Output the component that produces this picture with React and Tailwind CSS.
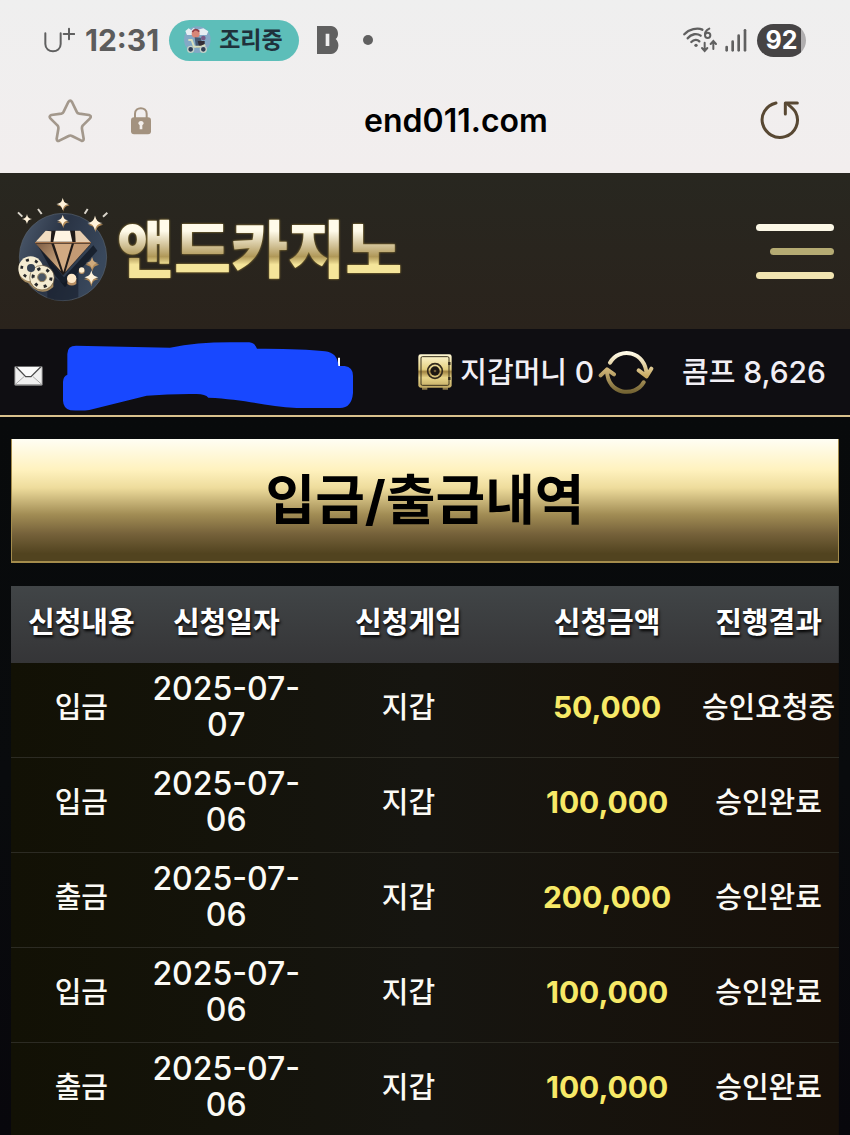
import React from "react";

const rows = [
  { type: "입금", date: "2025-07-07", game: "지갑", amount: "50,000", result: "승인요청중" },
  { type: "입금", date: "2025-07-06", game: "지갑", amount: "100,000", result: "승인완료" },
  { type: "출금", date: "2025-07-06", game: "지갑", amount: "200,000", result: "승인완료" },
  { type: "입금", date: "2025-07-06", game: "지갑", amount: "100,000", result: "승인완료" },
  { type: "출금", date: "2025-07-06", game: "지갑", amount: "100,000", result: "승인완료" },
];

function WifiIcon() {
  return (
    <svg viewBox="0 0 102 78" className="w-[34px] h-[26px]" fill="none" stroke="#606060" strokeWidth="7" strokeLinecap="round">
      <path d="M4 22 C18 6 44 1 58 8" />
      <path d="M14 34 C25 20 42 18 53 26" />
      <path d="M25 45 C33 37 43 37 49 43" />
      <circle cx="39" cy="55" r="5" fill="#606060" stroke="none" />
      <path d="M79 5 C67 11 65 20 66 25 M66 25 a8 8 0 1 0 16 0 a8 8 0 1 0 -16 0" strokeWidth="6" />
      <path d="M65 47 V71 M57 63 L65 72 L73 63" strokeWidth="6" />
      <path d="M91 66 V43 M83 51 L91 42 L99 51" strokeWidth="6" />
    </svg>
  );
}

function SignalIcon() {
  return (
    <svg viewBox="0 0 66 69" className="w-[22px] h-[23px]" stroke="#606060" strokeWidth="8" strokeLinecap="round">
      <path d="M5 54 V64" />
      <path d="M23 38 V64" />
      <path d="M41 20 V64" />
      <path d="M60 4 V64" />
    </svg>
  );
}

function StatusBar() {
  return (
    <div className="flex items-center justify-between h-20 pl-11 pr-11">
      <div className="flex items-center">
        <svg viewBox="0 0 93 78" className="w-[31px] h-[26px]" fill="none" stroke="#606060" strokeWidth="6" strokeLinecap="round">
          <path d="M4 19 V51 C4 80 50 80 50 51 V19" />
          <path d="M75 5 V37 M59 21 H91" />
        </svg>
        <span className="ml-2.5 text-[30px] leading-10 font-bold text-[#5c5c5c]">12:31</span>
        <div className="flex items-center ml-2.5 h-[41px] rounded-full bg-[#5dbeb9] pl-3.5 pr-4 gap-2">
          <svg viewBox="0 0 84 90" className="w-7 h-[30px]">
            <circle cx="43" cy="44" r="40" fill="#83a9c6" />
            <path d="M7 18 L17 10 L25 16 L31 9 L42 15 L61 10 L76 19 L71 30 H12 Z" fill="#e6eef3" />
            <circle cx="38" cy="26" r="12" fill="#d98778" />
            <path d="M28 21 Q37 7 49 20" fill="none" stroke="#913e48" strokeWidth="5" />
            <path d="M35 37 L53 38 L62 68 H39 Z" fill="#485a73" />
            <path d="M44 48 H65 V66 H49 Z" fill="#332d36" />
            <path d="M16 45 H26 L33 65 H55 L67 60" fill="none" stroke="#d8dfbf" strokeWidth="6" />
            <circle cx="23" cy="73" r="9" fill="#313f57" stroke="#c6d3c9" strokeWidth="4" />
            <circle cx="61" cy="73" r="9" fill="#313f57" stroke="#c6d3c9" strokeWidth="4" />
            <circle cx="61" cy="39" r="7" fill="#7a5a86" />
          </svg>
          <span className="text-[23px] leading-8 font-bold text-[#20313b]">조리중</span>
        </div>
        <svg viewBox="0 0 66 84" className="ml-[18px] w-[22px] h-7">
          <path fillRule="evenodd" fill="#606060" d="M0 0 H42 C62 0 70 27 56 39 C72 53 63 84 42 84 H0 Z M26 23 V60 H37 V23 Z" />
        </svg>
        <span className="ml-6 size-2.5 rounded-full bg-[#606060]" />
      </div>
      <div className="flex items-center">
        <WifiIcon />
        <span className="ml-2">
          <SignalIcon />
        </span>
        <div className="ml-2.5 h-[33px] w-[49px] rounded-full bg-linear-to-r from-[#464445] from-90% to-[#b0aeaf] to-90% text-center">
          <span className="text-[25px] leading-[33px] font-bold text-white">92</span>
        </div>
      </div>
    </div>
  );
}

function AddressBar() {
  return (
    <div className="flex items-center h-[93px] pb-3 pl-12 pr-12">
      <button type="button" aria-label="즐겨찾기">
        <svg viewBox="0 0 132 132" className="w-11 h-11" fill="none" stroke="#a3988c" strokeWidth="8" strokeLinejoin="round">
          <path d="M61 9 Q67 1 72 9 L86 38 Q88 43 94 44 L123 48 Q132 51 126 58 L104 80 Q101 84 102 90 L107 119 Q107 127 100 125 L72 111 Q67 108 62 111 L34 125 Q26 128 26 119 L31 90 Q32 84 29 80 L7 58 Q2 51 10 48 L40 44 Q45 43 47 38 Z" />
        </svg>
      </button>
      <button type="button" aria-label="보안 연결" className="ml-[38px]">
        <svg viewBox="0 0 66 84" className="w-[22px] h-7">
          <path d="M15 34 V20 C15 -2 50 -2 50 20 V34" fill="none" stroke="#a3927f" strokeWidth="6" />
          <rect x="3" y="31" width="60" height="51" rx="9" fill="#a3927f" />
          <path d="M25 50 a8 8 0 1 1 16 0 L37 55 V67 H29 V55 Z" fill="#f3efec" />
        </svg>
      </button>
      <input
        type="text"
        aria-label="주소"
        defaultValue="end011.com"
        className="flex-1 min-w-0 mx-2 bg-transparent text-center text-[32px] leading-10 font-semibold text-black outline-none"
      />
      <button type="button" aria-label="새로고침">
        <svg viewBox="0 0 126 126" className="w-[42px] h-[42px]" fill="none" stroke="#584833" strokeWidth="9" strokeLinecap="round" strokeLinejoin="round">
          <path d="M48 9 C16 17 1 46 8 72 C16 101 46 119 75 110 C107 101 121 65 107 37 C103 29 95 22 84 13" />
          <path d="M112 9 H76 V42" />
        </svg>
      </button>
    </div>
  );
}

const STAR = "M0 -19 C3 -6 6 -3 19 0 C6 3 3 6 0 19 C-3 6 -6 3 -19 0 C-6 -3 -3 -6 0 -19 Z";

function LogoMark() {
  return (
    <svg viewBox="0 0 315 345" className="w-[105px] h-[115px] shrink-0">
      <defs>
        <linearGradient id="disc" x1="0" y1="0" x2="1" y2="0.4">
          <stop offset="0" stopColor="#4f5d70" />
          <stop offset="0.5" stopColor="#2a3445" />
          <stop offset="1" stopColor="#39485c" />
        </linearGradient>
        <linearGradient id="stone" x1="0" y1="0" x2="1" y2="1">
          <stop offset="0" stopColor="#7d5c43" />
          <stop offset="1" stopColor="#d9b48a" />
        </linearGradient>
      </defs>
      <circle cx="159" cy="201" r="131" fill="url(#disc)" stroke="#56616d" strokeWidth="2" />
      <path d="M112 324 V250 L160 280 L205 250 V322 Q159 340 112 324" fill="#151c2a" opacity="0.6" />
      <path d="M84 168 L162 262 L250 166 L262 182 L165 292 L130 250 Z" fill="#0d121c" opacity="0.7" />
      <path d="M107 122 H210 L243 161 L159 256 L75 158 Z" fill="#201a18" />
      <path d="M107 122 L124 124 L122 155 H77 Z" fill="#f1ddc2" />
      <path d="M137 122 H180 L187 155 H130 Z" fill="#fff4e2" />
      <path d="M195 122 H210 L242 157 H197 Z" fill="#e6cdb0" />
      <path d="M77 161 H124 L153 244 Z" fill="url(#stone)" />
      <path d="M132 161 H185 L160 246 Z" fill="#d2aa82" />
      <path d="M192 161 H242 L166 246 Z" fill="#c39a74" />
      <path d="M75 158 H243" stroke="#a5764f" strokeWidth="4" />
      <path d="M27 248 Q30 272 55 279 L70 295 Q100 318 130 291 V272 L70 235 Z" fill="#a58b61" />
      <g fill="#f5ecd2">
        <circle cx="62" cy="236" r="37" />
        <circle cx="96" cy="263" r="36" />
      </g>
      <circle cx="96" cy="263" r="37" fill="none" stroke="#75654a" strokeWidth="2" />
      <circle cx="62" cy="236" r="27" fill="none" stroke="#27282a" strokeWidth="8" strokeDasharray="9 19" />
      <circle cx="96" cy="263" r="27" fill="#f5ecd2" stroke="#27282a" strokeWidth="9" strokeDasharray="9 19" />
      <circle cx="63" cy="234" r="12" fill="#354151" />
      <circle cx="96" cy="262" r="13" fill="#4b5664" stroke="#9c8965" strokeWidth="3" />
      <path d="M172 265 H199 V282 Q185 291 172 282 Z" fill="#b88e62" />
      <circle cx="185" cy="265" r="14" fill="#ffe9c8" />
      <circle cx="215" cy="243" r="9" fill="#b88e62" />
      <circle cx="215" cy="240" r="8" fill="#fff0d4" />
      <g fill="#b28a58">
        <path d={STAR} transform="translate(160 46)" />
        <path d={STAR} transform="translate(160 96)" />
        <path d={STAR} transform="translate(257 104) scale(1.2)" />
        <path d={STAR} transform="translate(247 224) scale(1.1)" />
        <path d={STAR} transform="translate(244 267) scale(1.2)" />
      </g>
      <g fill="#fff2da">
        <path d={STAR} transform="translate(158 42)" />
        <path d={STAR} transform="translate(158 91) scale(0.9)" />
        <path d={STAR} transform="translate(255 99) scale(1.2)" />
        <path d={STAR} transform="translate(51 87) scale(0.8)" />
        <path d={STAR} transform="translate(244 262) scale(1.1)" />
      </g>
      <path d={STAR} transform="translate(246 219)" fill="#d0aa7c" />
      <path d="M24 67 L37 80 M84 57 L95 72 M233 57 L224 71 M292 68 L279 80" stroke="#d9d4ca" strokeWidth="6" />
    </svg>
  );
}

function SiteHeader() {
  return (
    <header className="flex items-center justify-between h-39 pl-2.5 pr-4 bg-linear-to-b from-[#282720] to-[#2a231c]">
      <a href="#home" className="flex items-center gap-0.5 pb-2">
        <LogoMark />
        <span className="pt-2 text-[62px] leading-[72px] font-black whitespace-nowrap text-transparent bg-clip-text bg-linear-to-b from-[#fffbea] from-30% via-[#b09858] via-62% to-[#f5e59a] to-72% drop-shadow-[0_0_1px_#a88c38]">
          앤드카지노
        </span>
      </a>
      <button type="button" aria-label="메뉴" className="flex flex-col items-end gap-[17px]">
        <span className="w-[78px] h-[7px] rounded-full bg-[#fbf7e6]" />
        <span className="w-16 h-[7px] rounded-full bg-[#b5ab73]" />
        <span className="w-[78px] h-[7px] rounded-full bg-[#f1e4b1]" />
      </button>
    </header>
  );
}

function InfoBar() {
  return (
    <div className="flex items-center justify-between h-22 pl-3.5 pr-6 bg-[#0f0e12] border-b-2 border-[#d9c18d]">
      <div className="flex items-center gap-5 pt-2">
        <a href="#messages" aria-label="쪽지">
          <svg viewBox="0 0 87 60" className="w-[29px] h-5">
            <rect x="1" y="1" width="85" height="58" rx="4" fill="#8b8b8b" />
            <rect x="4" y="3" width="79" height="52" rx="2" fill="#f0f0f0" />
            <path d="M4 55 L30 32 M83 55 L57 32" stroke="#aaa" strokeWidth="3" />
            <path d="M7 3 L35 32 H51 L80 3" fill="#fafafa" stroke="#4a4a4a" strokeWidth="4" />
          </svg>
        </a>
        <svg viewBox="189 69 870 207" className="w-[290px] h-[69px]">
          <path d="M1014 116 H1020 V146 H1014 Z" fill="#fff" />
          <path
            fill="#1848ff"
            d="M202 105 Q202 80 228 80 L510 86 Q590 70 690 70 H748 Q765 72 771 89 Q900 88 975 97 Q1013 101 1015 141 H1034 Q1059 145 1059 170 V222 Q1055 267 1020 267 H890 C800 262 730 240 625 236 Q616 225 590 225 Q510 224 440 230 L268 273 Q250 276 211 274 Q190 268 189 245 V188 Q190 171 202 167 Z"
          />
        </svg>
      </div>
      <div className="flex items-center text-[29px] leading-10 font-medium text-[#f1eff5] whitespace-nowrap">
        <svg viewBox="0 0 102 108" className="w-[34px] h-9">
          <defs>
            <linearGradient id="gold" x1="0" y1="0" x2="0" y2="1">
              <stop offset="0" stopColor="#fff8d4" />
              <stop offset="0.45" stopColor="#e4d081" />
              <stop offset="0.52" stopColor="#a18442" />
              <stop offset="0.7" stopColor="#e9d68a" />
              <stop offset="1" stopColor="#c0a862" />
            </linearGradient>
          </defs>
          <path d="M12 98 H28 V107 H12 Z M74 98 H90 V107 H74 Z" fill="#8c7a4b" />
          <rect x="1" y="1" width="100" height="100" rx="7" fill="url(#gold)" />
          <rect x="9" y="8" width="84" height="86" rx="4" fill="none" stroke="#3b321c" strokeWidth="3" />
          <circle cx="51" cy="51" r="22" fill="none" stroke="#332a1c" strokeWidth="5" />
          <circle cx="51" cy="51" r="14" fill="#1d1712" />
          <circle cx="51" cy="51" r="4" fill="#6b5934" />
          <path d="M94 24 V33 M94 69 V78" stroke="#332a1c" strokeWidth="7" />
        </svg>
        <span className="ml-2">
          지갑머니 <span className="text-[30px]">0</span>
        </span>
        <button type="button" aria-label="머니 새로고침" className="ml-1">
          <svg viewBox="0 0 168 135" className="w-14 h-[45px]" fill="none" strokeWidth="12" strokeLinecap="round" strokeLinejoin="round">
            <defs>
              <linearGradient id="arcTop" x1="0" y1="0" x2="0" y2="1">
                <stop offset="0" stopColor="#fffbe8" />
                <stop offset="1" stopColor="#c7a961" />
              </linearGradient>
              <linearGradient id="arcBottom" x1="0" y1="0" x2="0" y2="1">
                <stop offset="0" stopColor="#d0b578" />
                <stop offset="1" stopColor="#756534" />
              </linearGradient>
            </defs>
            <path d="M36 38 C64 -11 143 2 146 75 M122 61 L146 79 L160 56" stroke="url(#arcTop)" />
            <path d="M137 97 C112 142 29 136 27 63 M8 76 L27 58 L48 73" stroke="url(#arcBottom)" />
          </svg>
        </button>
        <span className="ml-7">
          콤프 <span className="text-[30px]">8,626</span>
        </span>
      </div>
    </div>
  );
}

function HistoryTable() {
  return (
    <table className="w-full mt-[23px] table-fixed border-collapse text-center text-[29px] leading-9 whitespace-nowrap">
      <colgroup>
        <col className="w-[17%]" />
        <col className="w-[18%]" />
        <col className="w-[26%]" />
        <col className="w-[22%]" />
        <col className="w-[17%]" />
      </colgroup>
      <thead>
        <tr className="h-[77px] bg-linear-to-b from-[#414547] to-[#353537] text-white [text-shadow:1px_2px_3px_#000]">
          <th className="pb-1 font-bold">신청내용</th>
          <th className="pb-1 font-bold">신청일자</th>
          <th className="pb-1 font-bold">신청게임</th>
          <th className="pb-1 font-bold">신청금액</th>
          <th className="pb-1 font-bold">진행결과</th>
        </tr>
      </thead>
      <tbody className="bg-linear-to-r from-[#121105] via-[#161510] to-[#171009] text-[#fbfaf5] font-medium">
        {rows.map((row, i) => (
          <tr key={i} className="border-b border-[#2c2b23] last:border-b-0">
            <td className="pb-1">{row.type}</td>
            <td className="pt-2 pb-3.5 text-[32px]">
              {row.date.slice(0, 8)}
              <br />
              {row.date.slice(8)}
            </td>
            <td className="pb-1">{row.game}</td>
            <td className="pb-1.5 text-[30px] font-bold text-[#f7e967]">{row.amount}</td>
            <td className="pb-1">{row.result}</td>
          </tr>
        ))}
      </tbody>
    </table>
  );
}

export default function App() {
  return (
    <div className="min-h-screen overflow-hidden bg-[#07080b] font-[Inter,'Noto_Sans_CJK_KR',sans-serif]">
      <div className="bg-linear-to-b from-[#efefef] to-[#f2eeee]">
        <StatusBar />
        <AddressBar />
      </div>
      <SiteHeader />
      <InfoBar />
      <main className="px-[11px] pt-[22px] bg-linear-to-b from-[#080a0b] via-[#090b0d] to-[#08070c]">
        <h1 className="h-31 pt-0.5 border-x border-b-2 border-[#a48c4c] bg-[linear-gradient(#fffef4,#fff2bf_25%,#eedc9c_40%,#a18c54_62%,#75613a_78%,#51431f_94%)] text-center text-[54px] leading-[120px] font-bold text-black">
          입금/출금내역
        </h1>
        <HistoryTable />
      </main>
    </div>
  );
}
